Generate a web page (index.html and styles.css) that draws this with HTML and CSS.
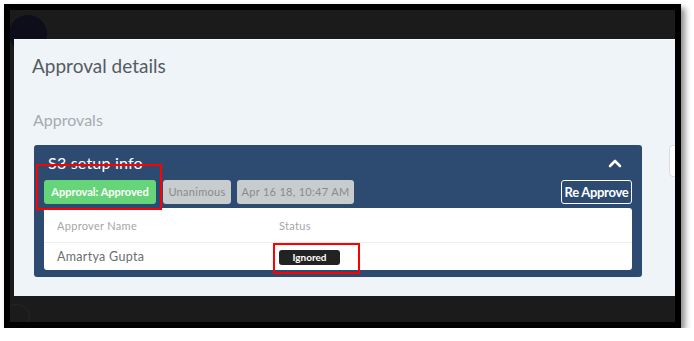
FILE: index.html
```html
<!DOCTYPE html>
<html lang="en">
<head>
    <meta charset="UTF-8">
    <meta name="viewport" content="width=device-width, initial-scale=1.0">
    <title>Approval details</title>
    <link rel="stylesheet" href="styles.css">
</head>
<body>
    <div class="frame">
        <div class="screen">
            <div class="avatar"></div>
            <div class="avatar-bottom"></div>
            <div class="modal">
                <h1 class="modal-title">Approval details</h1>
                <h2 class="section-title">Approvals</h2>
                <div class="modal-body">
                    <div class="panel">
                        <div class="panel-header">
                            <span class="panel-title">S3 setup info</span>
                            <svg class="chevron" width="14" height="10" viewBox="0 0 14 10">
                                <polyline points="2,8 7,3 12,8" fill="none" stroke="#fff" stroke-width="2.6" stroke-linecap="round" stroke-linejoin="round"/>
                            </svg>
                        </div>
                        <div class="badge-row">
                            <span class="badge badge-green">Approval: Approved</span>
                            <span class="badge badge-grey badge-rule">Unanimous</span>
                            <span class="badge badge-grey badge-date">Apr 16 18, 10:47 AM</span>
                            <button class="btn-outline">Re Approve</button>
                        </div>
                        <div class="approver-table">
                            <div class="table-row table-head">
                                <span>Approver Name</span>
                                <span>Status</span>
                            </div>
                            <div class="table-row">
                                <span class="approver-name">Amartya Gupta</span>
                                <span><span class="status-badge">Ignored</span></span>
                            </div>
                        </div>
                        <!-- annotation boxes -->
                        <div class="mark mark-approval"></div>
                        <div class="mark mark-status"></div>
                    </div>
                    <div class="side-box"></div>
                </div>
            </div>
        </div>
    </div>
</body>
</html>
```

FILE: styles.css
```css
/* General Styles */
body {
    margin: 0;
    background: #fff;
    font-family: 'Lato', 'Open Sans', sans-serif;
}

.frame {
    margin: 4px 0 0 4px;
    width: 665px;
    height: 312px;
    border: 6px solid #000;
    box-shadow: 4px 4px 6px rgba(0, 0, 0, 0.45);
}

.screen {
    position: relative;
    width: 665px;
    height: 312px;
    background: #1b1b1b;
    overflow: hidden;
    padding: 29px 0 0 4px;
    box-sizing: border-box;
}

.avatar {
    position: absolute;
    left: -1px;
    top: 5px;
    width: 38px;
    height: 38px;
    border-radius: 50%;
    background: #0e0e1b;
}

.avatar-bottom {
    position: absolute;
    left: -6px;
    top: 294px;
    width: 24px;
    height: 24px;
    border-radius: 50%;
    border: 1px solid #262626;
}

.modal {
    position: relative;
    height: 257px;
    background: #eff4f8;
    border-top: 1px solid #f7fafc;
    box-sizing: border-box;
    padding: 14px 0 0 18px;
}

.modal-title {
    margin: 0;
    font-size: 19px;
    line-height: 24px;
    font-weight: 400;
    color: #555b60;
}

.section-title {
    margin: 32px 0 0 1px;
    font-size: 16px;
    line-height: 20px;
    font-weight: 400;
    color: #a7abae;
}

.modal-body {
    display: flex;
    align-items: flex-start;
    margin: 15px 0 0 2px;
}

.panel {
    position: relative;
    width: 608px;
    flex-shrink: 0;
    background: #2d4a70;
    border-radius: 3px;
    padding: 0 10px 7px;
    box-sizing: border-box;
}

.panel-header {
    display: flex;
    align-items: center;
    justify-content: space-between;
    height: 35px;
    padding: 0 10px 0 4px;
}

.panel-title {
    font-size: 16px;
    color: #fff;
    letter-spacing: 0.2px;
}

.badge-row {
    display: flex;
    align-items: center;
    height: 24px;
}

.badge {
    height: 24px;
    line-height: 24px;
    border-radius: 3px;
    font-size: 11px;
    white-space: nowrap;
    text-align: center;
    box-sizing: border-box;
    letter-spacing: 0.3px;
}

.badge-green {
    width: 112px;
    margin-right: 7px;
    background: #66d478;
    color: #fff;
    font-weight: 700;
    letter-spacing: 0;
}

.badge-grey {
    background: #c8cccd;
    color: #878b8e;
}

.badge-rule {
    width: 68px;
    margin-right: 6px;
}

.badge-date {
    width: 117px;
}

.btn-outline {
    margin-left: auto;
    height: 24px;
    width: 71px;
    padding: 0;
    background: transparent;
    border: 1px solid #fff;
    border-radius: 3px;
    color: #fff;
    font-family: 'Lato', sans-serif;
    font-size: 13px;
    font-weight: 700;
    letter-spacing: -0.3px;
    white-space: nowrap;
}

.approver-table {
    margin-top: 4px;
    background: #fff;
    border-radius: 3px;
}

.table-row {
    display: grid;
    grid-template-columns: 222px 1fr;
    align-items: center;
    padding-left: 13px;
    height: 27px;
    font-size: 12.5px;
    color: #6a6e72;
    letter-spacing: 0.3px;
}

.table-head {
    height: 34px;
    border-bottom: 1px solid #eceef0;
    font-size: 11px;
    color: #a3a6a9;
}

.status-badge {
    display: inline-block;
    width: 61px;
    height: 15px;
    line-height: 15px;
    text-align: center;
    background: #222;
    border-radius: 3px;
    color: #fff;
    font-size: 10px;
    font-weight: 700;
    letter-spacing: 0;
}

.mark {
    position: absolute;
    border: 2px solid #f00;
    box-sizing: border-box;
}

.mark-approval {
    left: 2px;
    top: 19px;
    width: 126px;
    height: 46px;
}

.mark-status {
    left: 239px;
    top: 98px;
    width: 87px;
    height: 31px;
}

.side-box {
    flex-shrink: 0;
    margin-left: 27px;
    width: 20px;
    height: 30px;
    background: #fff;
    border: 1px solid #d8dde2;
    border-radius: 4px;
}
```
